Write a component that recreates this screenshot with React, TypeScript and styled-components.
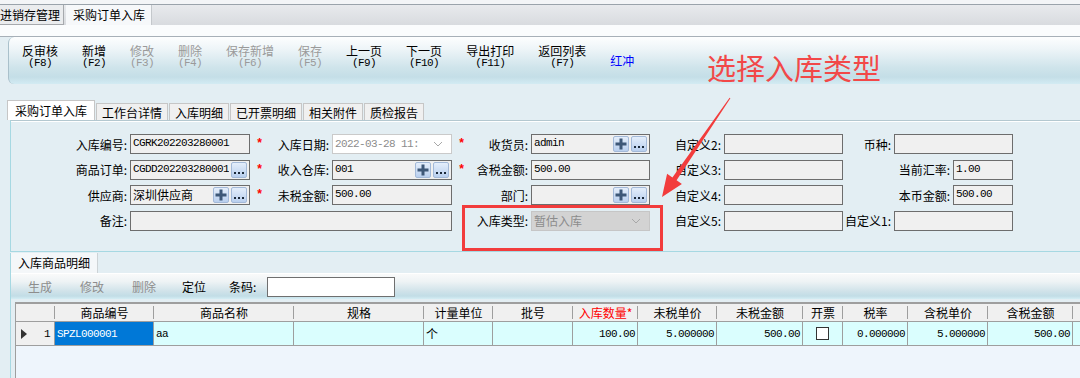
import React from 'react';
import styled, { createGlobalStyle } from 'styled-components';

const GlobalStyle = createGlobalStyle`
  html, body {
    margin: 0;
    padding: 0;
  }
  body {
    background: #e3eef3;
    font-family: "Noto Sans CJK SC", "Liberation Sans", sans-serif;
    font-size: 12px;
    color: #000;
  }
`;

const MONO = `"Liberation Mono", "Noto Sans CJK SC", monospace`;

const Page = styled.div`
  position: relative;
  width: 1080px;
  height: 378px;
  overflow: hidden;
  display: flex;
  flex-direction: column;
  background: #e3eef3;
`;

const TopStrip = styled.div`
  height: 4px;
  background: #f3f5f7;
`;

const WinTabBar = styled.div`
  display: flex;
  gap: 2px;
  height: 20px;
  border-top: 1px solid #9aa3ab;
  background: linear-gradient(#e8eaed, #d8dbdf);
`;

const WinTab = styled.div<{ $active?: boolean }>`
  height: ${(p) => (p.$active ? '20px' : '19px')};
  padding: ${(p) => (p.$active ? '0 6px 0 7px' : '0 3px 0 0')};
  line-height: 19px;
  background: ${(p) => (p.$active ? '#f6f8fa' : '#eaecee')};
  border-right: 1px solid ${(p) => (p.$active ? '#c4c8cc' : '#a6a9ad')};
  border-bottom: ${(p) => (p.$active ? 'none' : '1px solid #a6a9ad')};
  white-space: nowrap;
`;

const SubStrip = styled.div`
  height: 11px;
  background: #fafcfd;
  border-bottom: 1px solid #a7b0b8;
`;

const Toolbar = styled.div`
  display: flex;
  align-items: flex-start;
  gap: 24px;
  height: 47px;
  margin-left: 8px;
  padding-left: 13px;
  box-sizing: border-box;
  border-left: 1px solid #a9c0cb;
  border-radius: 6px 0 0 6px;
  background: linear-gradient(#fdfefe 0%, #eef5f8 25%, #cfe4eb 65%, #c4dee7 85%, #d3ebf3 100%);
`;

const ToolButton = styled.div<{ $tone?: 'normal' | 'disabled' | 'link' }>`
  display: flex;
  flex-direction: column;
  align-items: center;
  align-self: ${(p) => (p.$tone === 'link' ? 'center' : 'flex-start')};
  padding-top: ${(p) => (p.$tone === 'link' ? '0' : '7px')};
  color: ${(p) => (p.$tone === 'disabled' ? '#9a9a9a' : p.$tone === 'link' ? '#0000ff' : '#000')};
  white-space: nowrap;
`;

const ToolLabel = styled.span`
  line-height: 13px;
`;

const ToolKey = styled.span`
  font-family: ${MONO};
  font-size: 11px;
  letter-spacing: -0.6px;
  line-height: 13px;
`;

const FormTabs = styled.div`
  display: flex;
  align-items: flex-end;
  gap: 1px;
  height: 20px;
  margin-top: 16px;
  padding-left: 7px;
`;

const FormTab = styled.div<{ $active?: boolean }>`
  height: ${(p) => (p.$active ? '20px' : '17px')};
  line-height: ${(p) => (p.$active ? '20px' : '17px')};
  padding: ${(p) => (p.$active ? '0 7px' : '0 5px')};
  box-sizing: border-box;
  background: ${(p) => (p.$active ? '#ffffff' : '#f0f0f0')};
  border: 1px solid #c6c6c6;
  border-bottom: none;
  white-space: nowrap;
`;

const FormPanel = styled.div`
  height: 132px;
  margin-left: 10px;
  box-sizing: border-box;
  border-left: 1px solid #a6d8e2;
  border-top: 1px solid #b4c8d0;
  border-bottom: 1px solid #a6d8e2;
  box-shadow: inset 0 1px 0 #ffffff;
  padding-top: 13px;
`;

const FormGrid = styled.div`
  display: grid;
  grid-template-columns: 119px 120px 22px 60px 120px 18px 61px 119px 74px 119px 51px 119px;
  grid-auto-rows: 20px;
  row-gap: 5.5px;
`;

const Label = styled.div<{ $span?: number }>`
  grid-column: span ${(p) => p.$span ?? 1};
  display: flex;
  align-items: center;
  justify-content: flex-end;
  padding-right: 3px;
  white-space: nowrap;
`;

const Star = styled.div`
  display: flex;
  align-items: center;
  padding-left: 6px;
  color: #ff0000;
  font-family: ${MONO};
  font-weight: bold;
  font-size: 12px;
`;

const Empty = styled.div``;

const PairCell = styled.div`
  grid-column: span 2;
  display: flex;
  justify-content: flex-end;
  align-items: center;
`;

type FieldVariant = 'plain' | 'date' | 'disabled';

const Field = styled.div<{ $variant?: FieldVariant; $span?: number; $width?: number }>`
  grid-column: span ${(p) => p.$span ?? 1};
  width: ${(p) => (p.$width ? `${p.$width}px` : 'auto')};
  height: 20px;
  box-sizing: border-box;
  display: flex;
  align-items: center;
  gap: 2px;
  padding: 0 2px;
  border: 1px solid
    ${(p) => (p.$variant === 'date' ? '#cacaca' : p.$variant === 'disabled' ? '#c6c6c6' : '#6d6d6d')};
  background: ${(p) =>
    p.$variant === 'date' ? '#ffffff' : p.$variant === 'disabled' ? '#d3d3d3' : '#f0f0f0'};
`;

const FieldText = styled.span<{ $cjk?: boolean; $muted?: boolean; $center?: boolean }>`
  flex: 1;
  align-self: ${(p) => (p.$center ? 'center' : 'flex-start')};
  padding-top: ${(p) => (p.$center ? '0' : '1px')};
  font-family: ${(p) => (p.$cjk ? `"Noto Sans CJK SC", sans-serif` : MONO)};
  font-size: ${(p) => (p.$cjk ? '12px' : '11px')};
  letter-spacing: ${(p) => (p.$cjk ? '0' : '-0.6px')};
  line-height: 15px;
  color: ${(p) => (p.$muted ? '#8c8c8c' : '#000')};
  white-space: nowrap;
  overflow: hidden;
`;

const IconBtn = styled.span`
  width: 16px;
  height: 16px;
  box-sizing: border-box;
  display: flex;
  align-items: center;
  justify-content: center;
  border: 1px solid #a3b9d8;
  border-radius: 2px;
  background: linear-gradient(#e4eefb, #b9cfee);
`;

const Chevron = styled.svg`
  width: 10px;
  height: 6px;
  margin-right: 6px;
  flex: none;
`;

const LowerPanel = styled.div`
  flex: 1;
  display: flex;
  flex-direction: column;
  margin-left: 10px;
  margin-top: 1px;
  border-left: 1px solid #a6d8e2;
`;

const SubTabs = styled.div`
  display: flex;
  height: 20px;
  border-bottom: 1px solid #ffffff;
`;

const SubTab = styled.div`
  width: 86px;
  line-height: 20px;
  text-align: center;
  background: #f4f7f9;
  border-right: 1px solid #cdd3d6;
`;

const LowerToolbar = styled.div`
  display: flex;
  align-items: center;
  height: 25px;
  padding-left: 17px;
  background: linear-gradient(#f9fafa 0%, #eef3f5 30%, #cfe2e9 70%, #c2dde6 88%, #d4edf4 100%);
`;

const LowerAction = styled.span<{ $disabled?: boolean; $gap?: number }>`
  margin-right: ${(p) => p.$gap ?? 28}px;
  color: ${(p) => (p.$disabled ? '#8d8d8d' : '#000')};
  white-space: nowrap;
`;

const BarcodeInput = styled.div`
  width: 128px;
  height: 20px;
  box-sizing: border-box;
  border: 1px solid #6f6f6f;
  background: #ffffff;
`;

const COLS = [39, 99, 140, 130, 69, 80, 65, 79, 86, 40, 65, 80, 85, 120];
const COL_TEMPLATE = COLS.map((c) => `${c}px`).join(' ');

const DataGrid = styled.div`
  flex: 1;
  margin-top: 3px;
  margin-left: 4px;
  border-top: 2px solid #9e9e9e;
  border-left: 1px solid #9e9e9e;
  background: #eef5fc;
`;

const HeadRow = styled.div`
  display: grid;
  grid-template-columns: ${COL_TEMPLATE};
  height: 17px;
  background: #f0f0f0;
  border-bottom: 1px solid #9e9e9e;
`;

const HeadCell = styled.div<{ $required?: boolean }>`
  position: relative;
  line-height: 17px;
  text-align: center;
  color: ${(p) => (p.$required ? '#ff0000' : '#000')};
  white-space: nowrap;
  &::after {
    content: '';
    position: absolute;
    right: 0;
    top: 2px;
    bottom: 2px;
    width: 1px;
    background: #9e9e9e;
  }
`;

const BodyRow = styled.div`
  display: grid;
  grid-template-columns: ${COL_TEMPLATE};
  height: 23px;
  background: #dafefe;
  border-bottom: 1px solid #9e9e9e;
`;

const Cell = styled.div<{ $align?: 'left' | 'right' | 'center'; $selected?: boolean; $mono?: boolean }>`
  display: flex;
  align-items: center;
  justify-content: ${(p) =>
    p.$align === 'right' ? 'flex-end' : p.$align === 'center' ? 'center' : 'flex-start'};
  padding: 0 2px;
  border-right: 1px solid #9e9e9e;
  background: ${(p) => (p.$selected ? '#0078d7' : 'transparent')};
  color: ${(p) => (p.$selected ? '#ffffff' : '#000')};
  font-family: ${(p) => (p.$mono ? MONO : `"Noto Sans CJK SC", sans-serif`)};
  font-size: ${(p) => (p.$mono ? '11px' : '12px')};
  letter-spacing: ${(p) => (p.$mono ? '-0.6px' : '0')};
  white-space: nowrap;
  overflow: hidden;
`;

const RowHeader = styled(Cell)`
  background: #f0f0f0;
  justify-content: space-between;
  padding: 0 4px 0 5px;
`;

const CheckBox = styled.span`
  width: 11px;
  height: 11px;
  border: 1px solid #333333;
  background: #ffffff;
`;

const Callout = styled.div`
  position: absolute;
  left: 707px;
  top: 50px;
  font-size: 29px;
  line-height: 34px;
  color: #f24848;
  letter-spacing: 0;
  white-space: nowrap;
`;

const Highlight = styled.div`
  position: absolute;
  left: 462px;
  top: 205px;
  width: 201px;
  height: 46px;
  box-sizing: border-box;
  border: 3px solid #f23c3c;
`;

const ArrowSvg = styled.svg`
  position: absolute;
  left: 0;
  top: 0;
  pointer-events: none;
`;

const PlusIcon = () => (
  <IconBtn>
    <svg width="12" height="12" viewBox="0 0 12 12">
      <rect x="4.5" y="0.5" width="3" height="11" fill="#3e5878" />
      <rect x="0.5" y="4.5" width="11" height="3" fill="#3e5878" />
    </svg>
  </IconBtn>
);

const DotsIcon = () => (
  <IconBtn>
    <svg width="12" height="12" viewBox="0 0 12 12">
      <rect x="1" y="8" width="2" height="2" fill="#1c2a3a" />
      <rect x="5" y="8" width="2" height="2" fill="#1c2a3a" />
      <rect x="9" y="8" width="2" height="2" fill="#1c2a3a" />
    </svg>
  </IconBtn>
);

const Caret = () => (
  <Chevron viewBox="0 0 10 6">
    <polyline points="1,1 5,5 9,1" fill="none" stroke="#a8a8a8" strokeWidth="1" />
  </Chevron>
);

const tools: { label: string; key?: string; tone?: 'normal' | 'disabled' | 'link' }[] = [
  { label: '反审核', key: '(F8)' },
  { label: '新增', key: '(F2)' },
  { label: '修改', key: '(F3)', tone: 'disabled' },
  { label: '删除', key: '(F4)', tone: 'disabled' },
  { label: '保存新增', key: '(F6)', tone: 'disabled' },
  { label: '保存', key: '(F5)', tone: 'disabled' },
  { label: '上一页', key: '(F9)' },
  { label: '下一页', key: '(F10)' },
  { label: '导出打印', key: '(F11)' },
  { label: '返回列表', key: '(F7)' },
  { label: '红冲', tone: 'link' },
];

const formTabs = ['采购订单入库', '工作台详情', '入库明细', '已开票明细', '相关附件', '质检报告'];

const headers = [
  '',
  '商品编号',
  '商品名称',
  '规格',
  '计量单位',
  '批号',
  '入库数量*',
  '未税单价',
  '未税金额',
  '开票',
  '税率',
  '含税单价',
  '含税金额',
  '',
];

const App: React.FC = () => {
  return (
    <Page>
      <GlobalStyle />
      <TopStrip />
      <WinTabBar>
        <WinTab>进销存管理</WinTab>
        <WinTab $active>采购订单入库</WinTab>
      </WinTabBar>
      <SubStrip />

      <Toolbar>
        {tools.map((t) => (
          <ToolButton key={t.label} $tone={t.tone}>
            <ToolLabel>{t.label}</ToolLabel>
            {t.key && <ToolKey>{t.key}</ToolKey>}
          </ToolButton>
        ))}
      </Toolbar>

      <FormTabs>
        {formTabs.map((t, i) => (
          <FormTab key={t} $active={i === 0}>
            {t}
          </FormTab>
        ))}
      </FormTabs>

      <FormPanel>
        <FormGrid>
          {/* row 1 */}
          <Label>入库编号:</Label>
          <Field>
            <FieldText>CGRK202203280001</FieldText>
          </Field>
          <Star>*</Star>
          <Label>入库日期:</Label>
          <Field $variant="date">
            <FieldText $muted $center>
              2022-03-28 11:
            </FieldText>
            <Caret />
          </Field>
          <Star>*</Star>
          <Label>收货员:</Label>
          <Field>
            <FieldText>admin</FieldText>
            <PlusIcon />
            <DotsIcon />
          </Field>
          <Label>自定义2:</Label>
          <Field />
          <Label>币种:</Label>
          <Field />

          {/* row 2 */}
          <Label>商品订单:</Label>
          <Field>
            <FieldText>CGDD202203280001</FieldText>
            <DotsIcon />
          </Field>
          <Star>*</Star>
          <Label>收入仓库:</Label>
          <Field>
            <FieldText>001</FieldText>
            <PlusIcon />
            <DotsIcon />
          </Field>
          <Star>*</Star>
          <Label>含税金额:</Label>
          <Field>
            <FieldText>500.00</FieldText>
          </Field>
          <Label>自定义3:</Label>
          <Field />
          <PairCell>
            <Label>当前汇率:</Label>
            <Field $width={60}>
              <FieldText>1.00</FieldText>
            </Field>
          </PairCell>

          {/* row 3 */}
          <Label>供应商:</Label>
          <Field>
            <FieldText $cjk>深圳供应商</FieldText>
            <PlusIcon />
            <DotsIcon />
          </Field>
          <Star>*</Star>
          <Label>未税金额:</Label>
          <Field>
            <FieldText>500.00</FieldText>
          </Field>
          <Empty />
          <Label>部门:</Label>
          <Field>
            <FieldText />
            <PlusIcon />
            <DotsIcon />
          </Field>
          <Label>自定义4:</Label>
          <Field />
          <PairCell>
            <Label>本币金额:</Label>
            <Field $width={60}>
              <FieldText>500.00</FieldText>
            </Field>
          </PairCell>

          {/* row 4 */}
          <Label>备注:</Label>
          <Field $span={4} />
          <Empty />
          <Label>入库类型:</Label>
          <Field $variant="disabled">
            <FieldText $cjk $muted $center>
              暂估入库
            </FieldText>
            <Caret />
          </Field>
          <Label>自定义5:</Label>
          <Field />
          <Label>自定义1:</Label>
          <Field />
        </FormGrid>
      </FormPanel>

      <LowerPanel>
        <SubTabs>
          <SubTab>入库商品明细</SubTab>
        </SubTabs>
        <LowerToolbar>
          <LowerAction $disabled>生成</LowerAction>
          <LowerAction $disabled>修改</LowerAction>
          <LowerAction $disabled $gap={26}>
            删除
          </LowerAction>
          <LowerAction $gap={23}>定位</LowerAction>
          <LowerAction $gap={11}>条码:</LowerAction>
          <BarcodeInput />
        </LowerToolbar>

        <DataGrid>
          <HeadRow>
            {headers.map((h, i) => (
              <HeadCell key={i} $required={h === '入库数量*'}>
                {h}
              </HeadCell>
            ))}
          </HeadRow>
          <BodyRow>
            <RowHeader $mono>
              <svg width="6" height="10" viewBox="0 0 6 10">
                <polygon points="0,0 6,5 0,10" fill="#333333" />
              </svg>
              <span>1</span>
            </RowHeader>
            <Cell $selected $mono>
              SPZL000001
            </Cell>
            <Cell $mono>aa</Cell>
            <Cell />
            <Cell>个</Cell>
            <Cell />
            <Cell $align="right" $mono>
              100.00
            </Cell>
            <Cell $align="right" $mono>
              5.000000
            </Cell>
            <Cell $align="right" $mono>
              500.00
            </Cell>
            <Cell $align="center">
              <CheckBox />
            </Cell>
            <Cell $align="right" $mono>
              0.000000
            </Cell>
            <Cell $align="right" $mono>
              5.000000
            </Cell>
            <Cell $align="right" $mono>
              500.00
            </Cell>
            <Cell />
          </BodyRow>
        </DataGrid>
      </LowerPanel>

      {/* annotation overlay */}
      <Callout>选择入库类型</Callout>
      <Highlight />
      <ArrowSvg width="1080" height="378">
        <polygon
          points="730.4,98.3 676.6,180.3 681.9,184 662,197 667.1,173.8 672.4,177.5 729.6,97.7"
          fill="#f23c3c"
        />
      </ArrowSvg>
    </Page>
  );
};

export default App;
